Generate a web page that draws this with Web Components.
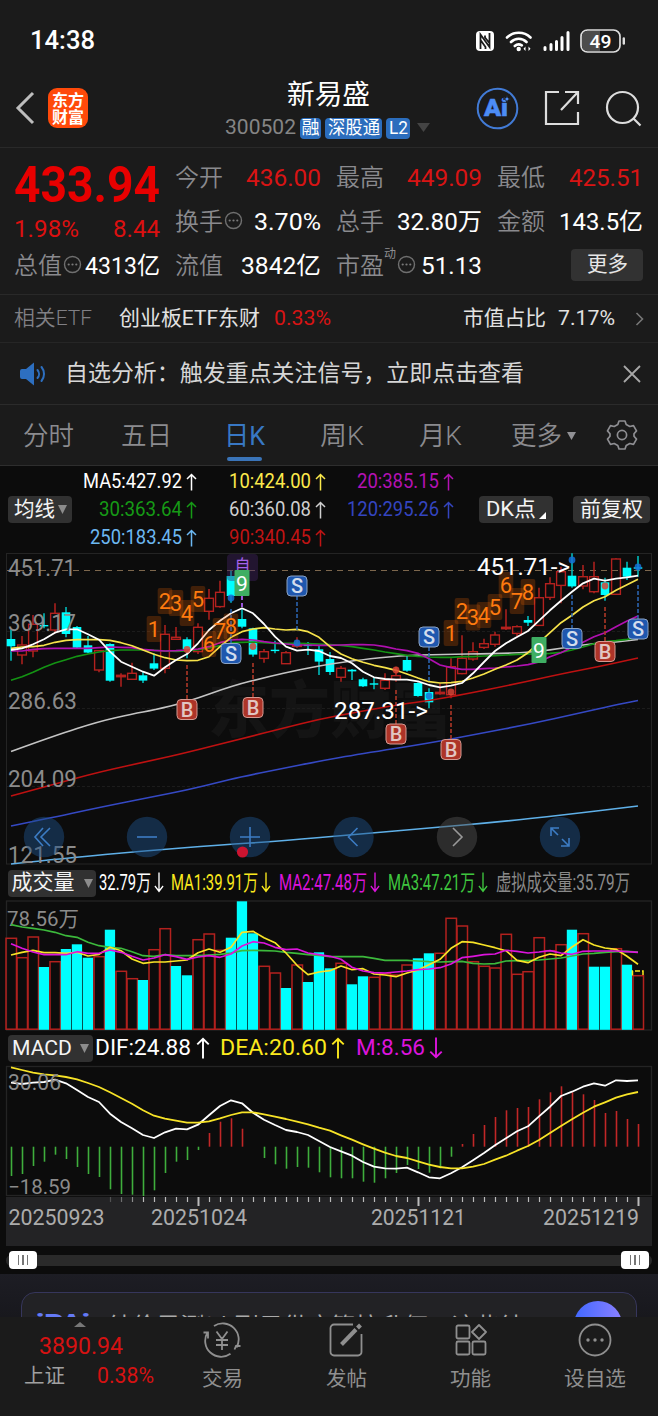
<!DOCTYPE html>
<html lang="zh-CN">
<head>
<meta charset="utf-8">
<title>新易盛 300502</title>
<style>
  html, body {
    margin: 0;
    background: #1b1b1b;
  }

  body {
    width: 658px;
    height: 1416px;
    overflow: hidden;
    font-family: Roboto, "Noto Sans CJK SC", sans-serif;
    color: #fff;
  }
</style>
</head>
<body>
<stock-page></stock-page>

<script>
// Small base class: each element only declares its template string
class BaseElement extends HTMLElement {
  constructor() {
    super();
    this.attachShadow({ mode: "open" });
    const template = document.createElement("template");
    template.innerHTML = this.template();
    this.shadowRoot.appendChild(template.content.cloneNode(true));
  }

  template() {
    return "<slot></slot>";
  }
}

class StatusBar extends BaseElement {
  template() {
    return `
      <style>
        :host { display: flex; height: 79px; box-sizing: border-box; padding: 2px 32px 0 30px; align-items: center; justify-content: space-between; }
        .right { display: flex; align-items: center; gap: 10px; }
        .right svg { display: block; }
      </style>
      <fit-text w="65" style="font-size:26px;font-weight:500">14:38</fit-text>
      <div class="right">
        <svg width="20" height="22" viewBox="0 0 20 22">
          <rect x="1" y="1" width="18" height="20" rx="4" fill="#fff"/>
          <path d="M5.500 19V4.500L14.500 17V3M10 5.500v2l4 5M5.500 10l5 7v2" fill="none" stroke="#1b1b1b" stroke-width="1.800"/>
        </svg>
        <svg width="28" height="22" viewBox="0 0 28 22" fill="none" stroke="#fff" stroke-width="2.600" stroke-linecap="round">
          <path d="M2 7.500a17 17 0 0 1 23.500 0M6 12a11 11 0 0 1 15.500 0M9.800 16a5.800 5.800 0 0 1 7 -.6"/>
          <circle cx="13.700" cy="19" r="1.500" fill="#fff" stroke-width="1.400"/>
          <path d="M20.500 16.500l-2 2.200 2 2.200zM23.500 16.500l2 2.200-2 2.200z" fill="#fff" stroke="none"/>
        </svg>
        <svg width="27" height="22" viewBox="0 0 27 22" stroke="#fff" stroke-width="3" stroke-linecap="round">
          <path d="M2 19.500v-2M8 19.500v-5M13.500 19.500v-8M19 19.500v-12M25 19.500v-17"/>
        </svg>
        <svg width="46" height="24" viewBox="0 0 46 24" font-size="19" font-weight="500" font-family="Roboto">
          <rect x="1" y="1" width="39" height="22" rx="6.500" fill="#1b1b1b" stroke="#ddd" stroke-width="1.700"/>
          <path d="M7 2h13v20H7a5 5 0 0 1-5-5V7a5 5 0 0 1 5-5z" fill="#4c4c4c"/>
          <path d="M43.800 9.500v5" stroke="#ddd" stroke-width="2.400" stroke-linecap="round"/>
          <text x="9.500" y="18.800" fill="#fff" textLength="22" lengthAdjust="spacingAndGlyphs">49</text>
        </svg>
      </div>
    `;
  }
}

class StockHeader extends BaseElement {
  template() {
    return `
      <style>
        :host { display: flex; height: 69px; box-sizing: border-box; border-bottom: 1px solid #292929; padding: 0 16px 0 15px; justify-content: space-between; }
        .side { display: flex; align-items: center; width: 170px; padding-bottom: 10px; box-sizing: border-box; }
        .left { gap: 13px; }
        .right { gap: 25px; justify-content: flex-end; }
        .logo { width: 40px; height: 40px; border-radius: 9px; background: #ff4a0a; color: #fff; font: 700 16px/17px "Noto Sans CJK SC"; text-align: center; display: flex; flex-direction: column; justify-content: center; }
        .mid { display: flex; flex-direction: column; align-items: center; }
        .name { height: 32px; display: flex; align-items: center; font-size: 27px; font-weight: 400; }
        .code { display: flex; align-items: center; gap: 4px; height: 34px; color: #858585; padding-left: 2px; }
        .tag { box-sizing: border-box; height: 21px; border-radius: 4px; background: #2b6dbd; color: #fff; display: flex; align-items: center; justify-content: center; font-size: 18px; }
      </style>
      <div class="side left">
        <svg width="20" height="34" viewBox="0 0 20 34"><path d="M18 2L3 17l15 15" fill="none" stroke="#bdbdbd" stroke-width="3"/></svg>
        <div class="logo"><span>东方</span><span>财富</span></div>
      </div>
      <div class="mid">
        <div class="name"><fit-text w="83">新易盛</fit-text></div>
        <div class="code">
          <fit-text w="71" style="font-size:21px">300502</fit-text>
          <span class="tag" style="width:21px"><fit-text w="18">融</fit-text></span>
          <span class="tag" style="width:57px"><fit-text w="52">深股通</fit-text></span>
          <span class="tag" style="width:24px"><fit-text w="19">L2</fit-text></span>
          <svg width="20" height="10" viewBox="0 0 20 10"><path d="M3 0h13l-6.500 9z" fill="#444"/></svg>
        </div>
      </div>
      <div class="side right">
        <svg width="43" height="43" viewBox="0 0 43 43">
          <circle cx="21.500" cy="21.500" r="19.800" fill="none" stroke="#427bd6" stroke-width="2"/>
          <text x="8" y="29" font-size="23" font-weight="900" font-family="Roboto" fill="#4c8cf5" stroke="#4c8cf5" stroke-width=".5" textLength="24" lengthAdjust="spacingAndGlyphs">Ai</text>
          <path d="M31 8l1 3 3 1-3 1-1 3-1-3-3-1 3-1z" fill="#4c8cf5" stroke="#1b1b1b" stroke-width=".8"/>
        </svg>
        <svg width="36" height="36" viewBox="0 0 36 36" fill="none" stroke="#ddd" stroke-width="2.200">
          <path d="M15 2H2v32h32V22M21 2h13v12M34 2L17 20"/>
        </svg>
        <svg width="37" height="37" viewBox="0 0 37 37" fill="none" stroke="#ddd" stroke-width="2.200">
          <circle cx="17.500" cy="17.500" r="15.500"/><path d="M28.500 28.500l7 7"/>
        </svg>
      </div>
    `;
  }
}

// label on the left, value on the right, optional info bubble between them
class QuoteCell extends BaseElement {
  template() {
    return `
      <style>
        :host { display: flex; align-items: center; height: 44px; font-size: 24px; color: #fff; }
        .label { display: flex; color: #8a8a8e; font-weight: 350; }
        .value { margin-left: auto; display: flex; }
        ::slotted(info-dot) { margin-left: 1px; }
      </style>
      <span class="label"><slot name="label"></slot></span>
      <slot name="info"></slot>
      <span class="value"><slot></slot></span>
    `;
  }
}

class InfoDot extends BaseElement {
  template() {
    return `
      <style>:host { display: flex; margin-top: -3px; }</style>
      <svg width="19" height="19" viewBox="0 0 19 19" fill="#7a7a7a">
        <circle cx="9.500" cy="9.500" r="8" fill="none" stroke="#6f6f6f" stroke-width="1.400"/>
        <circle cx="5.700" cy="9.500" r="1.100"/><circle cx="9.500" cy="9.500" r="1.100"/><circle cx="13.300" cy="9.500" r="1.100"/>
      </svg>
    `;
  }
}

class QuotePanel extends BaseElement {
  template() {
    return `
      <style>
        :host { display: grid; grid-template-columns: repeat(4, 146px); column-gap: 15px; height: 147px; box-sizing: border-box; padding: 8px 15px 0 14px; border-bottom: 1px solid #292929; grid-template-rows: repeat(3, 44px); }
        .price { grid-row: span 2; display: flex; flex-direction: column; color: #e80000; }
        .big { height: 58px; display: flex; align-items: center; font-size: 50px; font-weight: 700; }
        .change { height: 30px; display: flex; align-items: center; justify-content: space-between; font-size: 24px; color: #dc1010; }
        .red { color: #d81414; }
        .sup { font-size: 12px; align-self: flex-start; color: #8e8e92; margin-right: -13px; margin-top: 3px; }
        .more { width: 72px; height: 32px; background: #323232; border-radius: 4px; display: flex; align-items: center; justify-content: center; font-size: 21px; color: #e6e6e6; margin: 5px 0 0 auto; }
      </style>
      <div class="price">
        <div class="big"><fit-text w="146">433.94</fit-text></div>
        <div class="change"><fit-text w="65">1.98%</fit-text><fit-text w="47">8.44</fit-text></div>
      </div>
      <quote-cell><fit-text slot="label" w="48">今开</fit-text><fit-text class="red" w="75">436.00</fit-text></quote-cell>
      <quote-cell><fit-text slot="label" w="48">最高</fit-text><fit-text class="red" w="75">449.09</fit-text></quote-cell>
      <quote-cell><fit-text slot="label" w="48">最低</fit-text><fit-text class="red" w="74">425.51</fit-text></quote-cell>
      <quote-cell><fit-text slot="label" w="48">换手</fit-text><info-dot slot="info"></info-dot><fit-text w="67">3.70%</fit-text></quote-cell>
      <quote-cell><fit-text slot="label" w="48">总手</fit-text><fit-text w="85">32.80万</fit-text></quote-cell>
      <quote-cell><fit-text slot="label" w="48">金额</fit-text><fit-text w="84">143.5亿</fit-text></quote-cell>
      <quote-cell><fit-text slot="label" w="48">总值</fit-text><info-dot slot="info"></info-dot><fit-text w="75">4313亿</fit-text></quote-cell>
      <quote-cell><fit-text slot="label" w="48">流值</fit-text><fit-text w="80">3842亿</fit-text></quote-cell>
      <quote-cell><fit-text slot="label" w="48">市盈</fit-text><fit-text slot="info" class="sup" w="12">动</fit-text><info-dot slot="info" style="margin-left:14px"></info-dot><fit-text w="61">51.13</fit-text></quote-cell>
      <div class="more"><fit-text w="41">更多</fit-text></div>
    `;
  }
}

class EtfRow extends BaseElement {
  template() {
    return `
      <style>
        :host { display: flex; align-items: center; height: 48px; box-sizing: border-box; padding: 0 14px 0 14px; font-size: 21px; border-bottom: 1px solid #262626; color: #e2e2e2; }
        .gray { color: #808085; font-weight: 350; }
        .red { color: #d81414; }
      </style>
      <fit-text class="gray" w="78">相关ETF</fit-text>
      <fit-text w="141" style="margin-left:27px">创业板ETF东财</fit-text>
      <fit-text class="red" w="57" style="margin-left:14px">0.33%</fit-text>
      <fit-text w="83" style="margin-left:auto">市值占比</fit-text>
      <fit-text w="57" style="margin:0 20px 0 12px">7.17%</fit-text>
      <svg width="9" height="14" viewBox="0 0 9 14"><path d="M1.500 1l6 6-6 6" fill="none" stroke="#777" stroke-width="1.600"/></svg>
    `;
  }
}

class NoticeBar extends BaseElement {
  template() {
    return `
      <style>
        :host { display: flex; align-items: center; height: 62px; box-sizing: border-box; padding: 0 17px 0 19px; border-bottom: 1px solid #2b2b2b; font-size: 23px; color: #d6d6d6; }
        fit-text { margin: 0 auto 0 18px; }
      </style>
      <svg width="28" height="24" viewBox="0 0 28 24" fill="#2d6fc0">
        <path d="M1 9a2 2 0 0 1 2-2h4l8-6.500v23L7 17H3a2 2 0 0 1-2-2z"/>
        <path d="M18.500 8a6 6 0 0 1 0 8M22.500 5a11 11 0 0 1 0 14" fill="none" stroke="#2d6fc0" stroke-width="2" stroke-linecap="round"/>
      </svg>
      <fit-text w="459">自选分析：触发重点关注信号，立即点击查看</fit-text>
      <svg width="18" height="18" viewBox="0 0 18 18"><path d="M1 1l16 16M17 1L1 17" stroke="#a8a8a8" stroke-width="1.800"/></svg>
    `;
  }
}

class PeriodTabs extends BaseElement {
  template() {
    return `
      <style>
        :host { display: flex; height: 61px; box-sizing: border-box; border-bottom: 1px solid #2e2e2e; font-size: 26px; font-weight: 350; color: #8b8b8f; }
        .tab { width: 98px; flex: none; display: flex; flex-direction: column; align-items: center; justify-content: center; position: relative; padding-top: 3px; box-sizing: border-box; left: -1px; }
        .tab.active { color: #3878c4; font-weight: 400; }
        .tab.active::after { content: ""; position: absolute; bottom: 4px; width: 35px; height: 4px; border-radius: 2px; background: #3a74b8; }
        .more { width: 108px; flex-direction: row; gap: 5px; }
        .gear { width: 50px; padding-top: 0; }
      </style>
      <div class="tab"><fit-text w="51">分时</fit-text></div>
      <div class="tab"><fit-text w="51">五日</fit-text></div>
      <div class="tab active"><fit-text w="41">日K</fit-text></div>
      <div class="tab"><fit-text w="44">周K</fit-text></div>
      <div class="tab"><fit-text w="43">月K</fit-text></div>
      <div class="tab more"><fit-text w="51">更多</fit-text><svg width="9" height="9" viewBox="0 0 9 9"><path d="M0 0h9l-4.500 8z" fill="#919195"/></svg></div>
      <div class="tab gear">
        <svg width="32" height="32" viewBox="-16 -16 32 32" fill="none" stroke="#8e8e92" stroke-width="1.700" stroke-linejoin="round">
          <path d="M-3 -14h6l1.200 3.500 3.600 2 3.700-.8 3 5.200-2.500 2.800v2.600l2.500 2.800-3 5.200-3.700-.8-3.600 2L3 14h-6l-1.200-3.500-3.600-2-3.700.8-3-5.200 2.500-2.800v-2.600l-2.500-2.800 3-5.200 3.700.8 3.600-2z"/>
          <circle r="4.600"/>
        </svg>
      </div>
    `;
  }
}

class TrendArrow extends BaseElement {
  template() {
    return `
      <style>
        :host { display: flex; }
        :host([down]) svg { transform: rotate(180deg); }
        :host([tall]) svg { width: 10px; height: 21px; }
        :host([large]) svg { width: 14px; height: 22px; }
      </style>
      <svg width="11" height="18" viewBox="0 0 11 18" preserveAspectRatio="none"><path d="M5.500 17.500V1.500M1 6L5.500 1.500 10 6" fill="none" stroke="currentColor" stroke-width="1.500"/></svg>
    `;
  }
}

class PillButton extends BaseElement {
  template() {
    return `
      <style>
        :host { display: flex; align-items: center; justify-content: center; box-sizing: border-box; height: 27px; flex: none; background: #313131; border-radius: 4px; color: #f4f4f4; font-size: 21px; gap: 3px; }
        svg { display: none; }
        :host([drop]) .drop, :host([corner]) .corner { display: block; }
        .corner { align-self: flex-end; margin-bottom: 4px; }
      </style>
      <slot></slot>
      <svg class="drop" width="9" height="9" viewBox="0 0 9 9"><path d="M0 0h9l-4.500 9z" fill="#8c8c8c"/></svg>
      <svg class="corner" width="7" height="7" viewBox="0 0 7 7"><path d="M7 0v7H0z" fill="#fff"/></svg>
    `;
  }
}

class MaLegend extends BaseElement {
  template() {
    const items = [
      ["MA5:427.92", 99, "#ffffff"], ["10:424.00", 82, "#fbe94b"], ["20:385.15", 82, "#b412b4"],
      ["30:363.64", 83, "#169a16"], ["60:360.08", 82, "#cfcfcf"], ["120:295.26", 92, "#3445c0"],
      ["250:183.45", 92, "#6cb8f2"], ["90:340.45", 82, "#c01414"]
    ];
    return `
      <style>
        :host { display: flex; align-items: center; height: 87px; box-sizing: border-box; padding: 0 8px; }
        .grid { display: grid; grid-template-columns: 125px 129px 128px; grid-template-rows: repeat(3, 28px); font-size: 19.500px; margin-top: 1px; }
        .item { display: flex; justify-content: flex-end; align-items: center; gap: 4px; }
        .gap { margin-left: auto; }
      </style>
      <pill-button drop style="width:64px"><fit-text w="41">均线</fit-text></pill-button>
      <div class="grid">
        ${items.map(([text, w, color]) => `<div class="item" style="color:${color}"><fit-text w="${w}">${text}</fit-text><trend-arrow></trend-arrow></div>`).join("")}
      </div>
      <pill-button class="gap" corner style="width:74px"><fit-text w="50">DK点</fit-text></pill-button>
      <pill-button style="width:77px;margin-left:20px"><fit-text w="63">前复权</fit-text></pill-button>
    `;
  }
}

/* ---------- charts ---------- */

// Vertical values of all series are thirds of a pixel below the top of the plot.
const STEP = 11;
const xAt = i => 11 + i * STEP;
const yAt = v => +(v / 3).toFixed(1);
const RED = "#b3211e";
const CYAN = "#00ffff";

const line = (values, color, width = 1.7) =>
  `<polyline fill="none" stroke="${color}" stroke-width="${width}" stroke-linejoin="round" points="${values.map((v, i) => `${xAt(i)},${yAt(v)}`).join(" ")}"/>`;

const label = (x, y, w, text, fill = "#8b8b8b", size = 24) =>
  `<text x="${x}" y="${y}" textLength="${w}" lengthAdjust="spacingAndGlyphs" fill="${fill}" font-size="${size}">${text}</text>`;

// smooth curve through sparse [x, y] points, sampled as a quadratic chain
const curve = (points, color) => {
  let d = `M${points[0]}`;
  for (let i = 1; i < points.length - 1; i++) {
    const mx = (points[i][0] + points[i + 1][0]) / 2;
    const my = (points[i][1] + points[i + 1][1]) / 2;
    d += `Q${points[i]} ${mx},${my}`;
  }
  d += `L${points[points.length - 1]}`;
  return `<path d="${d}" fill="none" stroke="${color}" stroke-width="1.7"/>`;
};

// [up?, body top, body bottom, high, low]
const candles = [
  [0, 267, 289, 240, 332], [1, 285, 315, 258, 343], [1, 223, 303, 195, 322], [0, 225, 229, 190, 235], [1, 190, 240, 160, 250],
  [0, 187, 252, 171, 262], [0, 231, 293, 228, 295], [0, 286, 308, 258, 310], [1, 302, 360, 300, 367], [0, 282, 392, 280, 395],
  [1, 376, 380, 370, 410], [1, 370, 388, 338, 389], [0, 376, 392, 366, 399], [0, 340, 356, 310, 360], [1, 253, 355, 225, 370],
  [1, 262, 268, 231, 269], [0, 268, 298, 262, 325], [1, 232, 305, 220, 312], [1, 145, 184, 117, 209], [1, 127, 170, 92, 173],
  [0, 78, 138, 62, 158], [0, 207, 230, 175, 235], [0, 235, 314, 233, 320], [1, 305, 325, 297, 338], [0, 299, 302, 272, 310],
  [1, 308, 341, 303, 342], [1, 285, 289, 262, 293], [0, 284, 287, 276, 315], [0, 298, 335, 288, 375], [0, 327, 366, 306, 375],
  [1, 355, 382, 348, 395], [0, 359, 364, 357, 390], [0, 388, 409, 383, 411], [0, 400, 404, 381, 418], [1, 391, 415, 370, 420],
  [1, 377, 388, 350, 395], [0, 330, 362, 315, 365], [0, 399, 438, 397, 440], [0, 426, 457, 415, 475], [1, 427, 430, 400, 434],
  [1, 350, 434, 325, 445], [1, 325, 371, 256, 373], [1, 305, 327, 277, 332], [1, 281, 292, 266, 297], [1, 255, 283, 245, 290],
  [1, 232, 236, 178, 240], [1, 230, 250, 226, 258], [0, 210, 218, 198, 228], [1, 143, 226, 113, 228], [1, 101, 142, 82, 150],
  [1, 65, 106, 50, 160], [0, 77, 109, 10, 113], [1, 80, 108, 45, 118], [1, 80, 125, 35, 130], [0, 97, 135, 83, 152],
  [1, 27, 133, 25, 134], [0, 53, 80, 35, 90], [0, 52, 55, 18, 80]
];

const averages = {
  ma30: [391, 380, 367, 352, 339, 329, 319, 312, 306, 302, 300, 300, 300, 301, 303, 304, 303, 299, 294, 287, 278, 277, 276, 278, 280, 280, 280, 281, 282, 284, 286, 290, 295, 300, 306, 311, 316, 319, 321, 322, 322, 320, 320, 318, 317, 315, 313, 312, 312, 310, 307, 300, 291, 281, 275, 272, 268, 262],
  ma20: [303, 303, 298, 296, 295, 295, 295, 295, 293, 291, 292, 293, 298, 301, 303, 302, 300, 297, 290, 278, 270, 268, 270, 275, 279, 282, 285, 285, 286, 286, 285, 284, 284, 285, 290, 297, 302, 310, 326, 345, 353, 358, 358, 356, 354, 351, 348, 344, 336, 320, 308, 292, 277, 260, 248, 230, 213, 198],
  ma10: [295, 291, 290, 286, 277, 271, 269, 269, 269, 271, 278, 287, 300, 313, 323, 330, 332, 331, 320, 290, 262, 245, 237, 233, 237, 240, 238, 245, 262, 290, 312, 326, 337, 346, 353, 361, 372, 384, 395, 399, 398, 394, 384, 372, 358, 345, 330, 308, 278, 248, 218, 196, 171, 152, 140, 121, 104, 88],
  ma5: [300, 295, 283, 268, 248, 238, 238, 253, 269, 305, 335, 350, 365, 377, 352, 330, 312, 280, 240, 212, 190, 175, 190, 222, 260, 290, 302, 299, 303, 318, 324, 340, 365, 382, 387, 389, 389, 394, 405, 412, 407, 399, 370, 336, 303, 280, 261, 243, 212, 181, 152, 125, 100, 86, 92, 86, 82, 77]
};

class KChart extends BaseElement {
  candle([up, top, bottom, high, low], i) {
    const x = xAt(i);
    const h = Math.max(yAt(bottom - top), 1.4);
    if (up) {
      return `<path d="M${x} ${yAt(high)}V${yAt(top)}M${x} ${yAt(bottom)}V${yAt(low)}" stroke="${RED}" stroke-width="1.5"/>
        <rect x="${x - 4.4}" y="${yAt(top)}" width="8.8" height="${h}" fill="none" stroke="${RED}" stroke-width="1.4"/>`;
    }
    return `<path d="M${x} ${yAt(high)}V${yAt(low)}" stroke="#0bb" stroke-width="1.6"/>
      <rect x="${x - 4.3}" y="${yAt(top)}" width="8.6" height="${h}" fill="${CYAN}"/>`;
  }

  badge(x, y, letter) {
    const buy = letter === "B";
    return `<rect x="${x - 10}" y="${y - 10}" width="20" height="20" rx="4" fill="${buy ? "#ad3428" : "#1f57ae"}" stroke="${buy ? "#d49a92" : "#8ba3c4"}" stroke-width="1"/>
      <text x="${x}" y="${y + 7.2}" text-anchor="middle" font-size="20" font-weight="500" fill="${buy ? "#e2c6c2" : "#d3dded"}">${letter}</text>`;
  }

  stem(x, y1, y2, color) {
    return `<path d="M${x} ${y1}V${y2}" stroke="${color}" stroke-width="1.5" stroke-dasharray="4 2"/>`;
  }

  count(x, y, n) {
    return `<rect x="${x - 7.3}" y="${y - 13}" width="14.600" height="26" rx="2" fill="#ff6a00" fill-opacity=".22"/>
      <text x="${x}" y="${y + 7.500}" text-anchor="middle" font-size="22" fill="#ff7b0f">${n}</text>`;
  }

  nav(x, icon, gray) {
    return `<circle cx="${x}" cy="287" r="20.200" fill="${gray ? "#505050" : "#1e4f86"}" fill-opacity=".48"/>
      <path transform="translate(${x} 287)" d="${icon}" fill="none" stroke="${gray ? "#999" : "#3c7cc4"}" stroke-width="1.600"/>`;
  }

  template() {
    const stems = [
      [187, 115, 150, "B"], [231, 59, 93, "S"], [253, 113, 148, "B"], [297, 46, 80, "S"], [396, 140, 174, "B"], [429, 97, 131, "S"],
      [451, 155, 190, "B"], [572, 45, 79, "S"], [605, 57, 92, "B"], [638, 35, 69, "S"]
    ].map(([x, a, b, t]) => this.stem(x, a, b, t === "B" ? "#b83a28" : "#2d68b8")).join("");

    const dots = [
      [187, 99.500, 0], [253, 96.500, 0], [396, 120, 0], [451, 142, 0], [605, 36, 0],
      [231, 48, 1], [297, 93, 1], [429, 146, 1], [572, 10, 1], [638, 17, 1]
    ].map(([x, y, blue]) => `<circle cx="${x}" cy="${y}" r="3.400" fill="${blue ? "#1671d8" : "#d94436"}" fill-opacity=".85"/>`).join("");

    const badges = [
      [187, 159.500, "B"], [231, 103.500, "S"], [253, 157.500, "B"], [297, 36, "S"], [396, 184, "B"], [429, 87, "S"],
      [451, 199.500, "B"], [572, 88.500, "S"], [605, 101.500, "B"], [638, 79, "S"]
    ].map(args => this.badge(...args)).join("");

    const counts = [
      [154, 79, 1], [165, 51, 2], [176, 53, 3], [187, 63, 4], [198, 49, 5], [209, 94, 6], [220, 81, 7], [231, 76.500, 8],
      [451, 83, 1], [462, 61, 2], [473, 67.500, 3], [484, 65, 4], [495, 57, 5], [506, 35, 6], [517, 51, 7], [528, 42, 8]
    ].map(args => this.count(...args)).join("");

    return `
      <style>
        :host { display: block; height: 316px; margin-top: -3px; }
        svg { display: block; }
      </style>
      <svg width="658" height="316" viewBox="0 0 658 316" font-family='Roboto, "Noto Sans CJK SC", sans-serif'>
        ${label(208, 183, 244, "东方财富", "#141414", 62).replace("<text", '<text font-weight="900"')}
        <g fill="none" stroke="#242424">
          <rect x="6.500" y="3.500" width="645" height="310.500"/>
          <path d="M7 81.500H651M7 158.500H651M7 236.500H651" stroke-dasharray="3 2" stroke="#1c1c1c"/>
        </g>
        <path d="M7 20.500H651" stroke="#7d674d" stroke-dasharray="6 5"/>
        ${candles.map((c, i) => this.candle(c, i)).join("")}
        ${curve([[11, 314], [67, 308], [143, 301], [220, 295], [280, 291], [360, 284], [430, 278], [497, 272], [563, 265], [638, 256]], "#5fb0e8")}
        ${curve([[11, 276], [55, 267], [99, 257.500], [154, 246.500], [187, 240], [220, 232], [240, 227], [280, 219], [320, 211], [360, 204], [430, 193], [480, 183.500], [530, 174], [580, 163], [613, 155.500], [638, 150.500]], "#3549c4")}
        ${curve([[11, 246], [55, 234], [99, 222], [154, 210], [187, 202.500], [240, 189], [280, 179], [320, 169], [360, 161.500], [400, 154.500], [430, 150.500], [463, 144.500], [513, 134.500], [563, 123.500], [597, 117], [638, 108]], "#bd1111")}
        ${curve([[11, 201.500], [55, 185.500], [99, 171.500], [132, 164], [154, 160], [187, 152], [233, 135.500], [267, 127], [300, 119.500], [333, 113.500], [360, 110], [400, 105.500], [440, 104.500], [495, 103.500], [528, 102.500], [550, 100], [572, 96.500], [594, 93.500], [616, 92], [638, 89.500]], "#c4c4c4")}
        ${line(averages.ma30, "#149314")}
        ${line(averages.ma20, "#b010b0")}
        ${line(averages.ma10, "#f7e34a")}
        ${line(averages.ma5, "#ffffff", 1.8)}
        ${label(8, 25.5, 68, "451.71")}
        ${label(8, 81, 68, "369.17")}
        ${label(8, 158.5, 69, "286.63")}
        ${label(8, 237, 69, "204.09")}
        ${label(8, 312.5, 69, "121.55")}
        ${stems}${dots}
        <path d="M242 46v12" stroke="#9a55dd" stroke-width="2" stroke-dasharray="4 3"/>
        <rect x="227" y="4" width="31" height="27" rx="4" fill="#432463" fill-opacity=".42"/>
        <text x="242.500" y="21" text-anchor="middle" font-size="16" fill="#a663ec">自</text>
        ${counts}
        ${badges}
        <rect x="234.500" y="20" width="15" height="26" rx="1" fill="#3fae63"/>
        <rect x="531.500" y="87" width="15" height="26" rx="1" fill="#3fae63"/>
        <text x="242" y="40.500" text-anchor="middle" font-size="21" fill="#fff">9</text>
        <text x="539" y="107.500" text-anchor="middle" font-size="21" fill="#fff">9</text>
        ${label(477, 24.5, 93, "451.71-&gt;", "#ffffff", 23)}
        ${label(334, 169, 94, "287.31-&gt;", "#ffffff", 23)}
        ${this.nav(44, "M-1 -9L-9 0l8 9M6 -9L-3 0l9 9")}
        ${this.nav(147, "M-10 0H10")}
        ${this.nav(250, "M-10 0H10M0 -10V10")}
        ${this.nav(353.5, "M4 -9L-5 0l9 9")}
        ${this.nav(457, "M-4 -9L5 0l-9 9", true)}
        ${this.nav(560, "M-9 -1v-8h8M-9 -9l7 7M9 1v8H1M9 9L2 2")}
        <circle cx="242.500" cy="302" r="5.600" fill="#cc1430"/>
      </svg>
    `;
  }
}

// [up?, bar top]
const volumes = [
  [1, 235], [1, 293], [1, 231], [0, 321], [1, 305], [0, 267], [0, 253], [0, 293], [1, 290], [0, 209], [1, 334], [1, 356], [0, 360], [1, 269], [1, 206],
  [0, 318], [0, 346], [1, 239], [1, 222], [1, 271], [0, 233], [0, 124], [0, 220], [1, 319], [1, 339], [0, 384], [1, 315], [0, 366], [0, 277], [0, 325],
  [1, 310], [0, 373], [0, 349], [1, 352], [1, 341], [1, 345], [1, 315], [0, 295], [0, 280], [1, 280], [1, 175], [1, 198], [1, 305], [1, 319], [1, 324],
  [1, 223], [1, 343], [1, 335], [1, 233], [1, 272], [1, 254], [0, 209], [1, 221], [0, 320], [0, 320], [1, 266], [0, 314], [1, 347]
];

class IndicatorHeader extends BaseElement {
  template() {
    return `
      <style>
        :host { display: flex; align-items: center; padding-left: 8px; font-size: 22px; box-sizing: border-box; }
        ::slotted(span) { display: flex; align-items: center; gap: 3px; }
      </style>
      <slot></slot>
    `;
  }
}

class VolumeChart extends BaseElement {
  bar([up, top], i) {
    const x = xAt(i);
    const y = yAt(top - 120);
    return up
      ? `<rect x="${x - 5}" y="${y}" width="10.500" height="${129.2 - y}" fill="none" stroke="${RED}" stroke-width="1.500"/>`
      : `<rect x="${x - 5.2}" y="${y}" width="10.300" height="${129.8 - y}" fill="${CYAN}"/>`;
  }

  template() {
    const shift = list => list.map(v => v - 120);
    const short = shift([285, 277, 271, 278, 278, 280, 277, 288, 283, 262, 272, 297, 310, 306, 306, 303, 300, 278, 267, 277, 262, 217, 214, 233, 248, 279, 316, 344, 336, 332, 318, 329, 326, 342, 345, 350, 339, 330, 314, 298, 265, 245, 247, 255, 263, 272, 301, 308, 292, 282, 287, 261, 239, 255, 264, 268, 289, 313]);
    const mid = shift([251, 265, 276, 284, 284, 284, 275, 280, 280, 270, 277, 289, 300, 294, 284, 290, 298, 291, 287, 292, 282, 258, 245, 249, 262, 269, 267, 279, 284, 289, 298, 322, 333, 338, 339, 336, 333, 329, 327, 323, 312, 293, 289, 284, 282, 271, 274, 279, 276, 272, 279, 283, 274, 273, 273, 273, 275, 277]);
    const long = shift([194, 201, 205, 210, 217, 227, 232, 247, 257, 262, 265, 275, 287, 289, 284, 287, 287, 287, 285, 283, 279, 272, 271, 272, 273, 277, 280, 284, 286, 290, 290, 290, 290, 295, 301, 301, 301, 303, 305, 306, 305, 304, 310, 312, 311, 303, 302, 302, 300, 297, 294, 288, 282, 280, 277, 275, 274, 276]);
    return `
      <style>
        :host { display: block; }
        svg { display: block; }
        indicator-header { height: 34px; }
      </style>
      <indicator-header>
        <pill-button drop style="width:88px;gap:9px"><fit-text w="63">成交量</fit-text></pill-button>
        <span style="margin-left:3px"><fit-text w="52">32.79万</fit-text><trend-arrow tall down></trend-arrow></span>
        <span style="margin-left:7px;color:#fbe91d"><fit-text w="87">MA1:39.91万</fit-text><trend-arrow tall down></trend-arrow></span>
        <span style="margin-left:8px;color:#dc14dc"><fit-text w="88">MA2:47.48万</fit-text><trend-arrow tall down></trend-arrow></span>
        <span style="margin-left:8px;color:#3fc63f"><fit-text w="87">MA3:47.21万</fit-text><trend-arrow tall down></trend-arrow></span>
        <span style="margin-left:8px;color:#8a8a8a"><fit-text w="134">虚拟成交量:35.79万</fit-text></span>
      </indicator-header>
      <svg width="658" height="133" viewBox="0 0 658 133" font-family='Roboto, "Noto Sans CJK SC", sans-serif'>
        <rect x="6.500" y="1" width="645" height="129" fill="none" stroke="#242424" stroke-width="1.300"/>
        ${label(7, 26, 72, "78.56万", "#8b8b8b", 21)}
        ${volumes.map((v, i) => this.bar(v, i)).join("")}
        <path d="M632.500 75.500v-4.500h10.500v4.500" fill="none" stroke="#fbe91d" stroke-width="1.500" stroke-dasharray="5 2"/>
        ${line(long, "#3cb93c")}
        ${line(short, "#f7e327")}
        ${line(mid, "#dc14dc")}
      </svg>
    `;
  }
}

// histogram tips, 260 is the zero axis
const histogram = [
  348, 342, 318, 305, 284, 297, 321, 342, 351, 388, 402, 404, 408, 391, 339, 305, 300, 270, 219, 185, 175, 206, 260, 294, 313, 326, 321, 323, 337, 352,
  355, 355, 365, 368, 355, 339, 315, 327, 338, 325, 290, 252, 222, 195, 171, 151, 144, 141, 118, 97, 79, 97, 103, 120, 159, 153, 177, 192
];

class MacdChart extends BaseElement {
  template() {
    const dif = [68, 72, 68, 66, 59, 70, 90, 111, 126, 161, 186, 205, 225, 234, 217, 206, 208, 194, 166, 138, 121, 130, 158, 179, 195, 210, 216, 225, 243, 261, 274, 287, 306, 320, 325, 326, 323, 337, 352, 355, 340, 322, 301, 279, 256, 235, 214, 199, 169, 140, 108, 95, 80, 70, 77, 61, 63, 61];
    const dea = [22, 30, 38, 43, 46, 51, 58, 69, 81, 97, 114, 131, 151, 167, 176, 182, 188, 188, 184, 175, 165, 157, 157, 163, 170, 177, 185, 193, 203, 212, 226, 239, 253, 266, 278, 288, 294, 304, 314, 321, 325, 325, 320, 312, 299, 287, 272, 258, 240, 219, 198, 178, 158, 140, 127, 113, 103, 96];
    const bars = histogram.map((v, i) => v === 260 ? "" :
      `<path d="M${xAt(i) + .5} ${yAt(260)}V${yAt(v)}" stroke="${v < 260 ? "#c22727" : "#3fae3c"}" stroke-width="1.600"/>`).join("");
    const ticks = histogram.map((_, i) => {
      if (i < 9) return "";
      const major = [17, 37, 57].includes(i);
      return `<path d="M${xAt(i) + .5} 137v${major ? 9 : 5}" stroke="#bbb" stroke-width="${major ? 2 : 1.2}" opacity="${i < 12 ? .3 + (i - 9) * .2 : 1}"/>`;
    }).join("");
    return `
      <style>
        :host { display: block; }
        svg { display: block; margin-top: -2px; }
        indicator-header { height: 27px; margin-top: 2px; }
      </style>
      <indicator-header>
        <pill-button drop style="width:85px;gap:8px"><fit-text w="60">MACD</fit-text></pill-button>
        <span style="margin-left:2px;gap:5px"><fit-text w="96">DIF:24.88</fit-text><trend-arrow large></trend-arrow></span>
        <span style="margin-left:10px;color:#fbe91d;gap:4px"><fit-text w="107">DEA:20.60</fit-text><trend-arrow large></trend-arrow></span>
        <span style="margin-left:11px;color:#dc14dc;gap:4px"><fit-text w="69">M:8.56</fit-text><trend-arrow large down></trend-arrow></span>
      </indicator-header>
      <svg width="658" height="186" viewBox="0 0 658 186" font-family="Roboto, sans-serif">
        <rect x="6.500" y="6.500" width="645" height="129" fill="none" stroke="#242424" stroke-width="1.300"/>
        <rect x="6" y="137" width="646" height="49" fill="#232325"/>
        ${bars}${ticks}
        ${line(dif, "#ffffff", 1.8)}
        ${line(dea, "#f7e327", 1.8)}
        ${label(8, 30, 53, "30.06", "#8b8b8b", 22)}
        ${label(8, 133.5, 63, "−18.59", "#8b8b8b", 21)}
        ${label(8.5, 165, 96, "20250923", "#acacac", 22.5)}
        ${label(151, 165, 96, "20251024", "#acacac", 22.5)}
        ${label(371, 165, 95, "20251121", "#acacac", 22.5)}
        ${label(543, 165, 96, "20251219", "#acacac", 22.5)}
      </svg>
    `;
  }
}

class RangeSlider extends BaseElement {
  template() {
    return `
      <style>
        :host { display: flex; align-items: center; height: 28px; padding: 0 6px; }
        .track { flex: 1; height: 11px; border-radius: 6px; background: #2a2a2a; display: flex; align-items: center; justify-content: space-between; padding: 0 3px; }
        .thumb { width: 28px; height: 18px; border-radius: 4px; background: #fff; display: flex; align-items: center; justify-content: center; gap: 3px; }
        .thumb i { width: 1.500px; height: 10px; background: #777; }
      </style>
      <div class="track">
        <div class="thumb"><i></i><i></i><i></i></div>
        <div class="thumb"><i></i><i></i><i></i></div>
      </div>
    `;
  }
}

class AssistantCard extends BaseElement {
  template() {
    return `
      <style>
        :host { display: block; height: 43px; box-sizing: border-box; padding: 18px 21px 0; overflow: hidden; background: linear-gradient(#1d1d24, #18181d); }
        .card { height: 90px; box-sizing: border-box; border: 1.500px solid #36365c; border-radius: 14px; background: #222225; display: flex; align-items: flex-start; padding: 8px 14px; }
        .brand, .text { font-size: 22px; line-height: 30px; margin-top: 10px; }
        .brand { font-weight: 900; color: #647af6; margin-right: 18px; margin-top: 7px; }
        .text { color: #aaa; }
        .send { width: 48px; height: 48px; border-radius: 50%; margin-left: auto; background: linear-gradient(90deg, #4168ff, #8a80ff); display: flex; justify-content: center; }
      </style>
      <div class="card">
        <fit-text class="brand" w="54">iPAi</fit-text>
        <fit-text class="text" w="416">结伦早测以 副只供应等拉升何，这些结</fit-text>
        <div class="send"><svg width="20" height="24" viewBox="0 0 20 24"><path d="M10 18v8M3 25l7-7 7 7" fill="none" stroke="#fff" stroke-width="3"/></svg></div>
      </div>
    `;
  }
}

class NavItem extends BaseElement {
  template() {
    return `
      <style>
        :host { display: flex; flex-direction: column; align-items: center; width: 124.300px; padding-top: 3px; box-sizing: border-box; font-size: 20px; color: #8f8f8f; }
        .icon { height: 40px; display: flex; align-items: center; }
        .text { height: 38px; display: flex; align-items: center; }
      </style>
      <div class="icon"><slot name="icon"></slot></div>
      <div class="text"><slot></slot></div>
    `;
  }
}

class BottomNav extends BaseElement {
  template() {
    return `
      <style>
        :host { display: flex; height: 99px; background: #1b1b1b; }
        .index { width: 160px; display: flex; flex-direction: column; align-items: center; color: #d61212; }
        .index > svg { margin: 5px 0 5px; }
        .value { height: 29px; display: flex; align-items: center; font-size: 24px; padding-left: 2px; }
        .row { width: 130px; height: 30px; display: flex; align-items: center; justify-content: space-between; font-size: 22px; margin-left: 18px; }
        .row .name { color: #a0a0a0; font-size: 20px; }
        svg { fill: none; stroke: #8f8f8f; stroke-width: 1.800; }
      </style>
      <div class="index">
        <svg width="12" height="5" viewBox="0 0 12 5"><path d="M0 5l6-5 6 5z" fill="#777" stroke="none"/></svg>
        <div class="value"><fit-text w="84">3890.94</fit-text></div>
        <div class="row"><fit-text class="name" w="41">上证</fit-text><fit-text w="57">0.38%</fit-text></div>
      </div>
      <nav-item>
        <svg slot="icon" width="40" height="36" viewBox="-20 -18 40 36">
          <path d="M-8 -14A16 16 0 0 1 14.500 7.500M-14.500 -7.500A16 16 0 0 0 8.500 13.800M-18.500 -7.500h4.500v6M18.500 6h-4.500l-1.500 3.500M-5.500 -8.500L0 -1l5.500 -7.500M0 -1v11M-6 0H6M-6 5H6"/>
        </svg>
        <fit-text w="41">交易</fit-text>
      </nav-item>
      <nav-item>
        <svg slot="icon" width="34" height="34" viewBox="0 0 34 34">
          <path d="M24 1.500H5A3.500 3.500 0 0 0 1.500 5v24A3.500 3.500 0 0 0 5 32.500h24a3.500 3.500 0 0 0 3.500-3.500V11"/>
          <path d="M12.500 21.500L27 6.500" stroke-width="4"/><path d="M28.500 5l3-3" stroke-width="4"/>
        </svg>
        <fit-text w="41">发帖</fit-text>
      </nav-item>
      <nav-item>
        <svg slot="icon" width="32" height="32" viewBox="0 0 32 32">
          <rect x="1.500" y="1.500" width="13" height="13" rx="1.500"/><rect x="1.500" y="17.500" width="13" height="13" rx="1.500"/><rect x="17.500" y="17.500" width="13" height="13" rx="1.500"/>
          <path d="M24 1l7 7-7 7-7-7z" stroke-linejoin="round"/>
        </svg>
        <fit-text w="41">功能</fit-text>
      </nav-item>
      <nav-item>
        <svg slot="icon" width="34" height="34" viewBox="-17 -17 34 34">
          <circle r="15.500"/>
          <g fill="#8f8f8f" stroke="none"><circle cx="-7" r="1.700"/><circle r="1.700"/><circle cx="7" r="1.700"/></g>
        </svg>
        <fit-text w="62">设自选</fit-text>
      </nav-item>
    `;
  }
}

class StockPage extends BaseElement {
  template() {
    return `
      <style>
        :host { display: flex; flex-direction: column; height: 1416px; }
        .board { background: #0c0c0c; height: 808px; }
      </style>
      <status-bar></status-bar>
      <stock-header></stock-header>
      <quote-panel></quote-panel>
      <etf-row></etf-row>
      <notice-bar></notice-bar>
      <period-tabs></period-tabs>
      <div class="board">
        <ma-legend></ma-legend>
        <k-chart></k-chart>
        <volume-chart></volume-chart>
        <macd-chart></macd-chart>
        <range-slider></range-slider>
      </div>
      <assistant-card></assistant-card>
      <bottom-nav></bottom-nav>
    `;
  }
}

// Text squeezed or stretched to the width given in "w"
class FitText extends BaseElement {
  template() {
    return `
      <style>
        :host { display: inline-block; white-space: nowrap; line-height: 1.2; flex: none; }
        span { display: inline-block; transform-origin: 0 50%; }
      </style>
      <span><slot></slot></span>
    `;
  }

  connectedCallback() {
    const width = Number(this.getAttribute("w"));
    const span = this.shadowRoot.querySelector("span");
    const natural = span.getBoundingClientRect().width;
    this.style.width = `${width}px`;
    if (natural) span.style.transform = `scaleX(${width / natural})`;
  }
}

customElements.define("status-bar", StatusBar);
customElements.define("stock-header", StockHeader);
customElements.define("quote-cell", QuoteCell);
customElements.define("info-dot", InfoDot);
customElements.define("quote-panel", QuotePanel);
customElements.define("etf-row", EtfRow);
customElements.define("notice-bar", NoticeBar);
customElements.define("period-tabs", PeriodTabs);
customElements.define("trend-arrow", TrendArrow);
customElements.define("pill-button", PillButton);
customElements.define("ma-legend", MaLegend);
customElements.define("k-chart", KChart);
customElements.define("indicator-header", IndicatorHeader);
customElements.define("volume-chart", VolumeChart);
customElements.define("macd-chart", MacdChart);
customElements.define("range-slider", RangeSlider);
customElements.define("assistant-card", AssistantCard);
customElements.define("nav-item", NavItem);
customElements.define("bottom-nav", BottomNav);
customElements.define("stock-page", StockPage);
// last, so that every text is already laid out when it is measured
customElements.define("fit-text", FitText);
</script>
</body>
</html>
